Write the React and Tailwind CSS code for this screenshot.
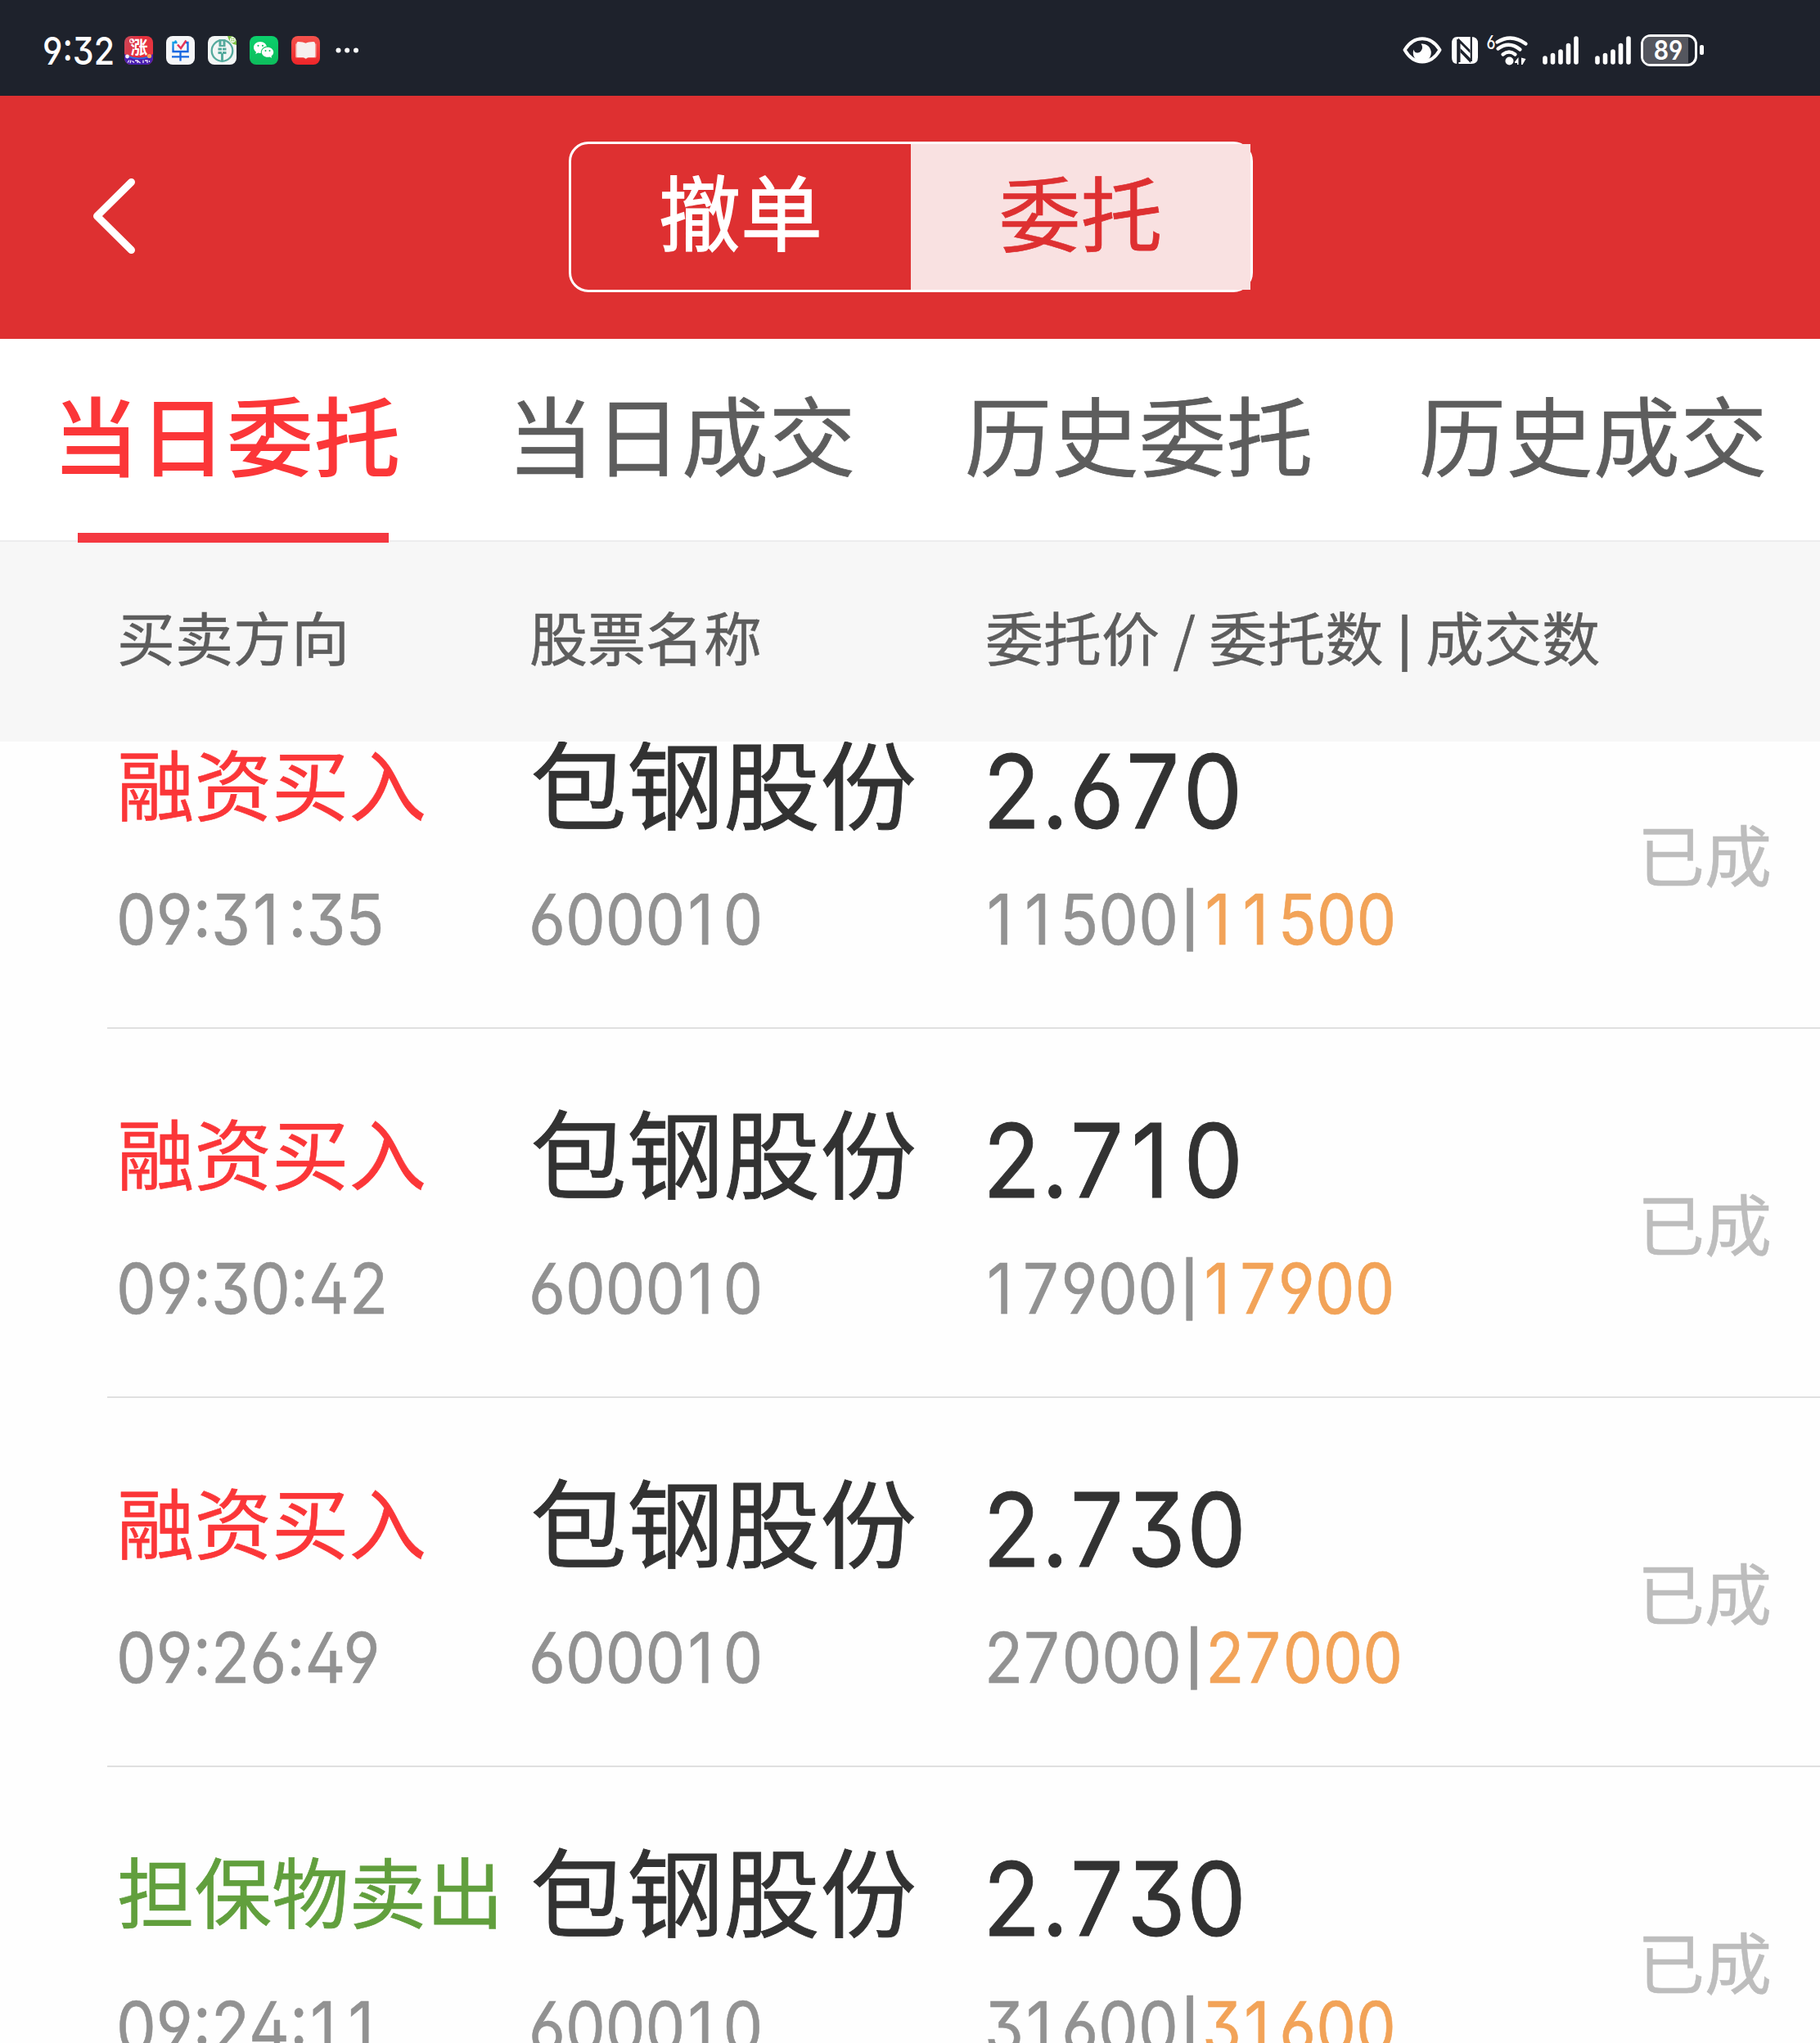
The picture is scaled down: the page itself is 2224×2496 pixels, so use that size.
import React from "react";

const CJK = "font-['Noto_Sans_CJK_SC',sans-serif]";
const INK = "[-webkit-text-stroke:0.007em]";
const NUM = "font-['Inter','Noto_Sans_CJK_SC',sans-serif] [font-feature-settings:'ss01','case']";

const orders = [
  { side: "融资买入", color: "text-[#fb3638]", time: "09:31:35", name: "包钢股份", code: "600010", price: "2.670", qty: "11500", done: "11500", status: "已成" },
  { side: "融资买入", color: "text-[#fb3638]", time: "09:30:42", name: "包钢股份", code: "600010", price: "2.710", qty: "17900", done: "17900", status: "已成" },
  { side: "融资买入", color: "text-[#fb3638]", time: "09:26:49", name: "包钢股份", code: "600010", price: "2.730", qty: "27000", done: "27000", status: "已成" },
  { side: "担保物卖出", color: "text-[#619f3d]", time: "09:24:11", name: "包钢股份", code: "600010", price: "2.730", qty: "31600", done: "31600", status: "已成" },
];

const tabs = ["当日委托", "当日成交", "历史委托", "历史成交"];
const tabShift = ["-ml-[5px]", "-ml-[4px]", "ml-0", "ml-0"];

// Widens the narrow digits "1" and "7" to the width of the others so that columns line up.
function Digits({ children }) {
  return children.split(/(1+|7)/).filter(Boolean).map((part, i) => {
    if (part[0] === "1") return <span key={i} className="-mr-[0.04em] ml-[0.04em] tracking-[0.19em]">{part}</span>;
    if (part === "7") return <span key={i} className="ml-[0.01em] tracking-[0.035em]">{part}</span>;
    return part;
  });
}

function StockApp() {
  return (
    <svg width="35" height="35" viewBox="0 0 35 35">
      <defs>
        <clipPath id="stock-clip"><rect width="35" height="35" rx="8" /></clipPath>
        <linearGradient id="stock-bg" x1="0" y1="0" x2="1" y2="0.3">
          <stop offset="0" stopColor="#c9485a" />
          <stop offset="0.5" stopColor="#e4303e" />
          <stop offset="1" stopColor="#e8343f" />
        </linearGradient>
      </defs>
      <g clipPath="url(#stock-clip)">
        <rect width="35" height="35" fill="url(#stock-bg)" />
        <path d="M0 22Q17 31 35 22V35H0Z" fill="#4a1fb0" />
        <path d="M5 25Q17 30 31 25" fill="none" stroke="#2f6fe0" strokeWidth="1.6" />
        <circle cx="3.5" cy="25" r="2.4" fill="#f3f0ff" />
        <circle cx="30.5" cy="24.5" r="2.6" fill="#f5a35c" />
        <circle cx="9" cy="6" r="2.4" fill="none" stroke="#ffe3e3" strokeWidth="1.3" />
        <text x="18" y="21" textAnchor="middle" fontSize="21" fontWeight="700" fill="#fff" className="font-['Noto_Sans_CJK_SC',sans-serif]">涨</text>
        <path d="M4 32.5l2-3M7 33l1-3.500M9.500 30.500l2.500 2M13 30h3v3M16.500 30.500l3 2.500M23 29.500v3.500M25 30h3v3M30.500 30v2" fill="none" stroke="#f2e6ff" strokeWidth="1.3" />
      </g>
    </svg>
  );
}

function OrderApp() {
  return (
    <svg width="35" height="35" viewBox="0 0 35 35">
      <defs>
        <linearGradient id="order-ink" gradientUnits="userSpaceOnUse" x1="8" y1="5" x2="18" y2="22">
          <stop offset="0" stopColor="#10b5ea" />
          <stop offset="0.6" stopColor="#1767e0" />
          <stop offset="1" stopColor="#1767e0" />
        </linearGradient>
      </defs>
      <rect width="35" height="35" rx="8" fill="#f5f6f8" />
      <path d="M11 5.500l1.500 2.500M13.500 8H8.500V19H26.500V8H24M17.500 19V30.500M7 25.300H28" fill="none" stroke="url(#order-ink)" strokeWidth="2.300" />
      <path d="M14 10.500l4 4.500L24.500 5.500" fill="none" stroke="#e5345a" strokeWidth="2.500" />
    </svg>
  );
}

function BankApp() {
  return (
    <svg width="35" height="35" viewBox="0 0 35 35">
      <defs><clipPath id="bank-clip"><rect width="35" height="35" rx="8" /></clipPath></defs>
      <g clipPath="url(#bank-clip)">
        <rect width="35" height="35" fill="#f3f6f5" />
        <circle cx="17.500" cy="18" r="12.800" fill="none" stroke="#55aa9d" strokeWidth="2.300" />
        <path d="M13.500 4h3v7h2V4h3v9h-8z" fill="#55aa9d" />
        <path d="M12.500 14.500h4.500v3h-4.500zM18 14.500h4.500v3H18zM12.500 19h4.500v3h-4.500zM18 19h4.500v3H18z" fill="#55aa9d" />
        <path d="M17.500 21v10" stroke="#55aa9d" strokeWidth="3" />
        <path d="M24 0h11v11Q26 9 24 0z" fill="#7cc242" />
        <circle cx="30.500" cy="4.500" r="2.800" fill="none" stroke="#fff" strokeWidth="1.200" />
        <path d="M27.500 4.500h6M30.500 1.500v6" stroke="#fff" strokeWidth="0.800" />
      </g>
    </svg>
  );
}

function ChatApp() {
  return (
    <svg width="35" height="35" viewBox="0 0 35 35">
      <defs>
        <linearGradient id="chat-bg" x1="0" y1="0" x2="0" y2="1">
          <stop offset="0" stopColor="#0bd06c" /><stop offset="1" stopColor="#0dbd5c" />
        </linearGradient>
      </defs>
      <rect width="35" height="35" rx="8" fill="url(#chat-bg)" />
      <path d="M13 7C8.500 7 5 10 5 14c0 2.300 1.200 4.200 3 5.500l-.7 2.600 3-1.500c4 1.200 10.700-.5 10.700-6.600C21 10 17.500 7 13 7z" fill="#fff" />
      <ellipse cx="22" cy="19.800" rx="8.300" ry="7.200" fill="#0dc562" />
      <path d="M22 13.800c-4 0-7.200 2.700-7.200 6s3.200 6 7.200 6c.9 0 1.700-.1 2.500-.4l2.600 1.400-.6-2.300c1.700-1.100 2.700-2.800 2.700-4.700 0-3.300-3.200-6-7.200-6z" fill="#fff" />
      <g fill="#0dc562">
        <circle cx="10.500" cy="11.800" r="1.100" /><circle cx="16" cy="11.800" r="1.100" />
        <circle cx="19.500" cy="18" r="1" /><circle cx="24.500" cy="18" r="1" />
      </g>
    </svg>
  );
}

function ReaderApp() {
  return (
    <svg width="35" height="35" viewBox="0 0 35 35">
      <defs>
        <linearGradient id="reader-bg" x1="0" y1="0" x2="0" y2="1">
          <stop offset="0" stopColor="#f4524c" /><stop offset="1" stopColor="#ee2529" />
        </linearGradient>
      </defs>
      <rect width="35" height="35" rx="8" fill="url(#reader-bg)" />
      <path d="M5 9.500h25.500V25q0 1.500-1.500 1.500H20l-2.300 1.800-2.300-1.800H6.500Q5 26.500 5 25z" fill="#f7a09b" />
      <path d="M6.500 9q0-2 2-2 6 0 9.200 1.800Q20.500 7 27 7q2 0 2 2v15.500q0 1.500-1.500 1.500H21l-3.300 1.200-3.300-1.200H8Q6.500 26 6.500 24.500z" fill="#f6efee" />
    </svg>
  );
}

function StatusBar() {
  return (
    <div className="flex h-[117px] shrink-0 items-start bg-[#1e222c] pt-[41px]">
      <div className={`${NUM} -mt-[9px] ml-[52px] h-[60px] w-[100px] text-[47px] leading-[60px] font-medium whitespace-nowrap text-white`}>
        <span className="inline-block origin-left scale-x-[0.875]">9:32</span>
      </div>
      <div className="flex gap-4 pt-[3px]">
        <StockApp /><OrderApp /><BankApp /><ChatApp /><ReaderApp />
      </div>
      <svg className="mt-[15px] ml-[19px]" width="30" height="12" viewBox="0 0 30 12" fill="#fff">
        <circle cx="3.500" cy="5.500" r="3" /><circle cx="14.200" cy="5.500" r="3" /><circle cx="25" cy="5.500" r="3" />
      </svg>
      <svg className="ml-auto" width="48" height="41" viewBox="0 0 48 41">
        <path d="M2.500 20Q11 6.300 24 6.300T45.500 20Q37 34.500 24 34.500T2.500 20z" fill="none" stroke="#fff" strokeWidth="4" strokeLinejoin="round" />
        <path d="M22.500 12.500A11 11 0 1 1 13.500 19.500Q14.500 24 18.500 23.500T24 18Q24.500 15 22.500 12.500z" fill="#fff" />
      </svg>
      <svg className="ml-[11px]" width="34" height="41" viewBox="0 0 34 41">
        <path d="M8 4H25Q33 4 33 12V29Q33 37 25 37H8Q1 37 1 29V12Q1 4 8 4z" fill="#fff" />
        <path d="M8.300 7V37M24.800 4V34" stroke="#1e222c" strokeWidth="2.200" />
        <path d="M9 5.500L23.500 20V24L11.500 12V35H9z" fill="#1e222c" />
        <path d="M11.500 18L24 30.500V36L11.500 23z" fill="#1e222c" />
      </svg>
      <svg className="-mt-[8px] ml-[9px]" width="52" height="49" viewBox="0 -8 52 49">
        <text x="0.500" y="18.500" fontSize="23" fontWeight="500" fill="#fff" textLength="11" lengthAdjust="spacingAndGlyphs" className="font-['Inter',sans-serif] [font-feature-settings:'ss01']">6</text>
        <g fill="none" stroke="#fff" strokeWidth="4.300" strokeLinecap="round">
          <path d="M13.500 10.500Q31 -0.500 48.500 12.500" />
          <path d="M14.500 18.500Q28 8.500 41.500 19.500" />
          <path d="M20.500 25.500Q28 19.500 35.500 25.500" />
        </g>
        <circle cx="28.500" cy="33.500" r="5" fill="#fff" />
        <path d="M35 34.500L39.500 29V38H38V36H35zM43 29.500L48.500 31 44.500 38H43z" fill="#fff" />
      </svg>
      {[0, 1].map((n) => (
        <svg key={n} className={n ? "ml-[19px]" : "ml-[17px]"} width="45" height="41" viewBox="0 0 45 41" stroke="#fff" strokeWidth="5.600" strokeLinecap="round">
          <path d="M3 30V35M12.500 26.500V35M22 22V35M31.500 14.500V35M41 6V35" />
        </svg>
      ))}
      <div className="ml-[11px] flex items-center">
        <div className="mt-px flex h-[39px] w-[69px] items-stretch rounded-[12px] border-3 border-white">
          <div className={`${NUM} flex h-full w-[55px] items-center justify-center rounded-l-[8px] bg-[#54565e] pl-[6px] text-[33px] leading-none font-semibold text-white`}>
            <span className="inline-block scale-x-[0.87]">89</span>
          </div>
        </div>
        <div className="ml-[3px] h-[12px] w-[5px] rounded-[2px] bg-white" />
      </div>
      <div className="w-[142px]" />
    </div>
  );
}

function TitleBar() {
  return (
    <div className={`${CJK} flex h-[297px] shrink-0 bg-[#de3031]`}>
      <svg className="mt-[96px] ml-[109px]" width="60" height="100" viewBox="0 0 60 100">
        <path d="M51.500 9.500L9.500 51L51.500 92.500" fill="none" stroke="#fff" strokeWidth="9" strokeLinecap="round" strokeLinejoin="round" />
      </svg>
      <div className="mt-[56px] ml-[526px] flex h-[184px] w-[836px] rounded-[24px] border-3 border-white text-[100px]">
        <div className="h-[178px] w-[415px] pr-[1px] text-center leading-[160px] text-white [-webkit-text-stroke:0.014em]">撤单</div>
        <div className={`${INK} h-[178px] w-[415px] bg-[#f9e1e1] text-center leading-[162px] text-[#de3031]`}>委托</div>
      </div>
    </div>
  );
}

function Tabs() {
  return (
    <div className={`${CJK} relative flex h-[248px] shrink-0 gap-[130px] border-b-2 border-[#ededee] bg-white pl-[69px] text-[106px] text-[#5d5d5d]`}>
      {tabs.map((t, i) => (
        <div key={t} className="flex w-[425px] shrink-0 flex-col">
          <div className={`h-[237px] shrink-0 leading-[228px] tracking-[0.005em] whitespace-nowrap ${tabShift[i]} ${i === 0 ? "font-medium text-[#fb3638]" : INK}`}>{t}</div>
          {i === 0 && <div className="ml-[26px] h-[12px] w-[380px] shrink-0 bg-[#f43840]" />}
        </div>
      ))}
    </div>
  );
}

function OrderRow({ o }) {
  return (
    <div className="h-[451px] shrink-0 pl-[131px]">
      <div className="flex h-full border-b-2 border-[#e0e0e0] pl-[12px] whitespace-nowrap">
        <div className="w-[503px] pt-[85px]">
          <div className={`${CJK} ${INK} h-[128px] text-[94.500px] leading-[128px] ${o.color}`}>{o.side}</div>
          <div className={`${NUM} ${INK} mt-[60px] -ml-[1px] h-[90px] w-[360px] origin-left scale-x-[0.91] text-[85px] leading-[90px] text-[#929292]`}><Digits>{o.time}</Digits></div>
        </div>
        <div className="w-[557px] pt-[84px]">
          <div className={`${CJK} ${INK} ml-[2px] h-[128px] text-[118px] leading-[128px] text-[#323232]`}>{o.name}</div>
          <div className={`${NUM} ${INK} mt-[61px] h-[90px] w-[360px] origin-left scale-x-[0.91] text-[85px] leading-[90px] text-[#929292]`}><Digits>{o.code}</Digits></div>
        </div>
        <div className="w-[760px] pt-[97px]">
          <div className={`${NUM} ${INK} -ml-[2px] h-[128px] w-[400px] origin-left scale-x-[0.925] text-[125px] leading-[128px] tracking-[0.008em] text-[#323232]`}><Digits>{o.price}</Digits></div>
          <div className={`${NUM} ${INK} mt-[48px] h-[90px] w-[600px] origin-left scale-x-[0.91] text-[85px] leading-[90px] text-[#929292]`}>
            <Digits>{o.qty}</Digits>
            <span className="mr-[2px] ml-[2px] inline-block scale-x-120 scale-y-[0.76]">|</span>
            <span className="text-[#f2a358]"><Digits>{o.done}</Digits></span>
          </div>
        </div>
        <div className={`${CJK} ${INK} mt-[176px] mr-[59px] ml-auto h-[120px] text-[82px] leading-[120px] text-[#bdbdbd]`}>{o.status}</div>
      </div>
    </div>
  );
}

export default function App() {
  return (
    <div className="flex h-[2496px] w-[2224px] flex-col overflow-hidden bg-[#fefefe]">
      <StatusBar />
      <TitleBar />
      <div className="z-10 shrink-0"><Tabs /></div>
      <div className={`${CJK} ${INK} flex h-[244px] shrink-0 bg-[#f7f7f7] pl-[143px] text-[71px] leading-[228px] whitespace-nowrap text-[#5d5d5d]`}>
        <div className="w-[503px]">买卖方向</div>
        <div className="w-[558px] pl-px">股票名称</div>
        <div className="[word-spacing:0.4px]">委托价 / 委托数 <span className="inline-block origin-[50%_49%] scale-x-125 scale-y-[0.88]">|</span> 成交数</div>
      </div>
      <div className="flex min-h-0 flex-1 flex-col overflow-hidden">
        <div className="-mt-[100px]">
          {orders.map((o) => <OrderRow key={o.time} o={o} />)}
        </div>
      </div>
    </div>
  );
}
